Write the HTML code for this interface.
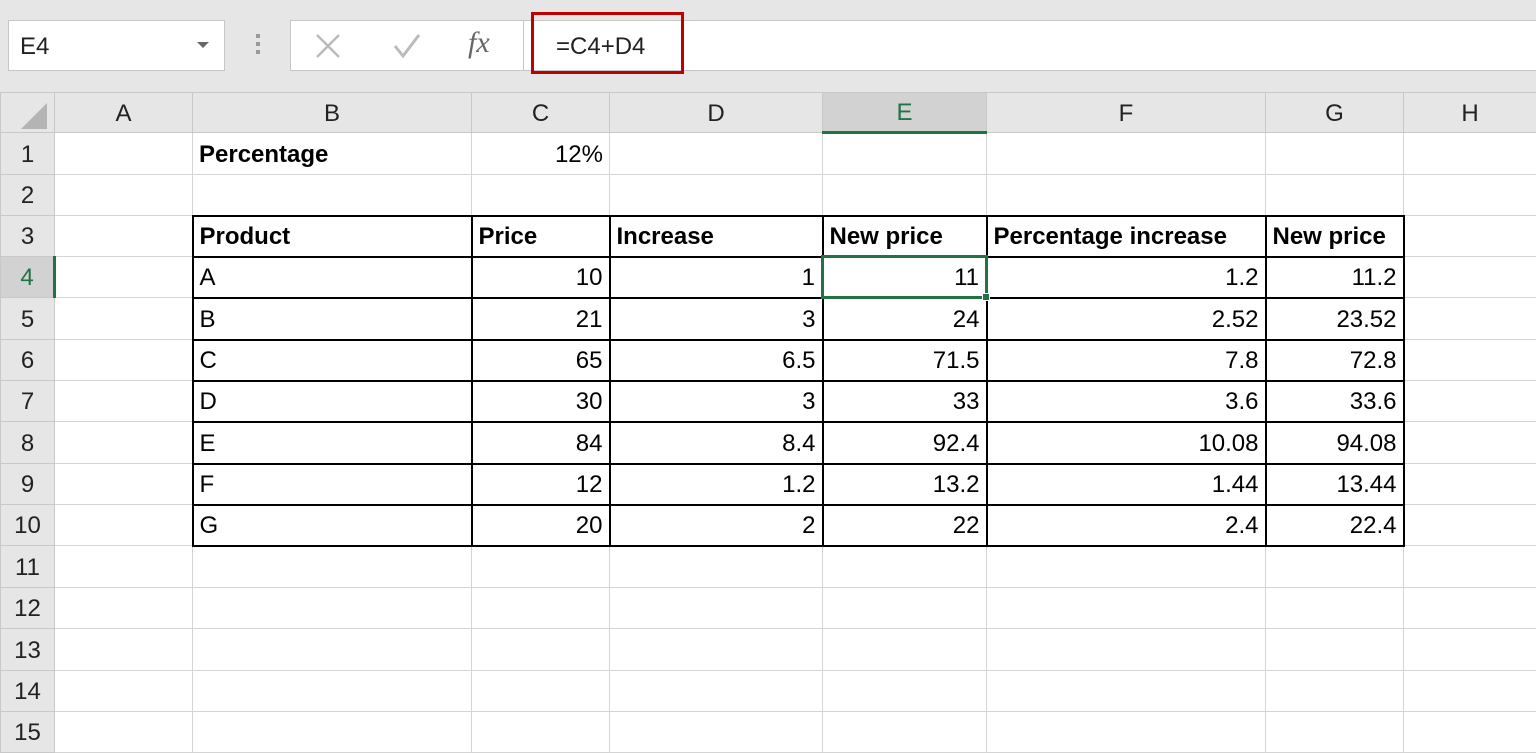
<!DOCTYPE html>
<html><head><meta charset="utf-8"><style>
*{margin:0;padding:0;box-sizing:border-box}
body{width:1536px;height:729px;overflow:hidden;background:#fff;font-family:"Liberation Sans",Arial,sans-serif;position:relative}
.bar{position:absolute;left:0;top:0;width:1536px;height:92px;background:#e6e6e6}
.box{position:absolute;background:#fff;border:1px solid #c6c6c6}
table{position:absolute;left:0;top:92px;width:1536px;border-collapse:collapse;table-layout:fixed}
td{border:1px solid #d4d4d4;font-size:24px;color:#000;padding:2px 6px 0 6px;white-space:nowrap;overflow:hidden;line-height:1}
tr.h td{background:#e6e6e6;text-align:center;color:#222;border-color:#c8c8c8}
td.rh{background:#e6e6e6;text-align:center;padding-left:0;padding-right:0;color:#222;border-color:#c8c8c8}
td.k{border:2px solid #000}
td.r{text-align:right}
td.b{font-weight:bold}
</style></head><body>
<div class="bar"></div>
<div class="box" style="left:8px;top:20px;width:217px;height:51px"></div>
<div style="position:absolute;left:20px;top:33px;font-size:24px;color:#222">E4</div>
<div style="position:absolute;left:197px;top:42px;width:0;height:0;border-left:6px solid transparent;border-right:6px solid transparent;border-top:6px solid #666"></div>
<div style="position:absolute;left:256px;top:34px;width:4px;height:20px;background:repeating-linear-gradient(#999 0 4px,transparent 4px 8px)"></div>
<div class="box" style="left:290px;top:20px;width:234px;height:51px"></div>
<svg style="position:absolute;left:314px;top:32px" width="28" height="28"><path d="M3 3L25 25M25 3L3 25" stroke="#bbb" stroke-width="2.5"/></svg>
<svg style="position:absolute;left:392px;top:32px" width="30" height="28"><path d="M3 14L11 24L27 3" stroke="#bbb" stroke-width="3" fill="none"/></svg>
<div style="position:absolute;left:468px;top:26px;font-family:'Liberation Serif',serif;font-style:italic;font-size:30px;color:#666">fx</div>
<div class="box" style="left:523px;top:20px;width:1020px;height:51px;border-right:none"></div>
<div style="position:absolute;left:531px;top:12px;width:153px;height:62px;border:3px solid #c00000"></div>
<div style="position:absolute;left:556px;top:33px;font-size:24px;color:#222">=C4+D4</div>
<table>
<colgroup><col style="width:54px"><col style="width:138px"><col style="width:279px"><col style="width:138px"><col style="width:213px"><col style="width:164px"><col style="width:279px"><col style="width:138px"><col style="width:133px"></colgroup>
<tr class="h" style="height:40px"><td style="padding:0"><svg width="40" height="34" style="display:block;margin:2px 0 0 8px"><path d="M38 6L38 32L12 32Z" fill="#b4b4b4"/></svg></td><td>A</td><td>B</td><td>C</td><td>D</td><td style="background:#d2d2d2;border-bottom:3px solid #217346;color:#217346">E</td><td>F</td><td>G</td><td>H</td></tr>
<tr style="height:42px"><td class="rh">1</td><td></td><td class="b">Percentage</td><td class="r">12%</td><td></td><td></td><td></td><td></td><td></td></tr>
<tr style="height:41px"><td class="rh">2</td><td></td><td></td><td></td><td></td><td></td><td></td><td></td><td></td></tr>
<tr style="height:41px"><td class="rh">3</td><td></td><td class="k b">Product</td><td class="k b">Price</td><td class="k b">Increase</td><td class="k b">New price</td><td class="k b">Percentage increase</td><td class="k b">New price</td><td></td></tr>
<tr style="height:41px"><td class="rh" style="background:#d2d2d2;border-right:3px solid #217346;color:#217346">4</td><td></td><td class="k">A</td><td class="k r">10</td><td class="k r">1</td><td class="k r" style="border:3px solid #217346">11</td><td class="k r">1.2</td><td class="k r">11.2</td><td></td></tr>
<tr style="height:42px"><td class="rh">5</td><td></td><td class="k">B</td><td class="k r">21</td><td class="k r">3</td><td class="k r">24</td><td class="k r">2.52</td><td class="k r">23.52</td><td></td></tr>
<tr style="height:41px"><td class="rh">6</td><td></td><td class="k">C</td><td class="k r">65</td><td class="k r">6.5</td><td class="k r">71.5</td><td class="k r">7.8</td><td class="k r">72.8</td><td></td></tr>
<tr style="height:41px"><td class="rh">7</td><td></td><td class="k">D</td><td class="k r">30</td><td class="k r">3</td><td class="k r">33</td><td class="k r">3.6</td><td class="k r">33.6</td><td></td></tr>
<tr style="height:42px"><td class="rh">8</td><td></td><td class="k">E</td><td class="k r">84</td><td class="k r">8.4</td><td class="k r">92.4</td><td class="k r">10.08</td><td class="k r">94.08</td><td></td></tr>
<tr style="height:41px"><td class="rh">9</td><td></td><td class="k">F</td><td class="k r">12</td><td class="k r">1.2</td><td class="k r">13.2</td><td class="k r">1.44</td><td class="k r">13.44</td><td></td></tr>
<tr style="height:41px"><td class="rh">10</td><td></td><td class="k">G</td><td class="k r">20</td><td class="k r">2</td><td class="k r">22</td><td class="k r">2.4</td><td class="k r">22.4</td><td></td></tr>
<tr style="height:42px"><td class="rh">11</td><td></td><td></td><td></td><td></td><td></td><td></td><td></td><td></td></tr>
<tr style="height:41px"><td class="rh">12</td><td></td><td></td><td></td><td></td><td></td><td></td><td></td><td></td></tr>
<tr style="height:42px"><td class="rh">13</td><td></td><td></td><td></td><td></td><td></td><td></td><td></td><td></td></tr>
<tr style="height:41px"><td class="rh">14</td><td></td><td></td><td></td><td></td><td></td><td></td><td></td><td></td></tr>
<tr style="height:41px"><td class="rh">15</td><td></td><td></td><td></td><td></td><td></td><td></td><td></td><td></td></tr>
</table>
<div style="position:absolute;left:982px;top:293px;width:8px;height:8px;background:#217346;border:1px solid #fff"></div>
</body></html>
